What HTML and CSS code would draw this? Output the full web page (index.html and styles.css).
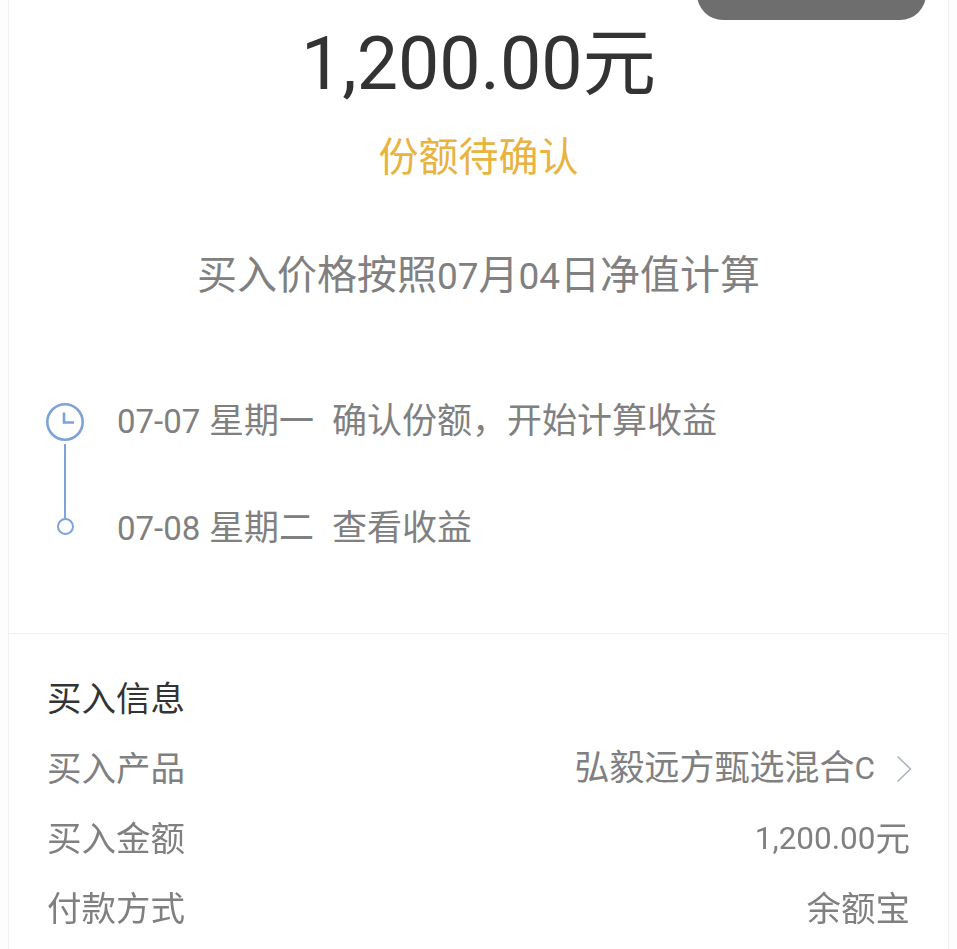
FILE: index.html
```html
<!DOCTYPE html>
<html lang="zh-CN">
<head>
    <meta charset="UTF-8">
    <meta name="viewport" content="width=device-width, initial-scale=1.0">
    <title>买入详情</title>
    <link rel="stylesheet" href="styles.css">
</head>
<body>
    <div class="toast"></div>
    <div class="card">
        <div class="summary">
            <div class="amount">1,200.00元</div>
            <div class="status">份额待确认</div>
            <div class="note">买入价格按照<span class="num">07</span>月<span class="num">04</span>日净值计算</div>
        </div>

        <div class="timeline">
            <div class="track">
                <svg class="clock" width="40" height="40" viewBox="0 0 40 40">
                    <circle cx="20" cy="20" r="17.7" fill="none" stroke="#7da3d8" stroke-width="2.6"/>
                    <path d="M19 10.5V20.5H29" fill="none" stroke="#7da3d8" stroke-width="2.6"/>
                </svg>
                <div class="line"></div>
                <div class="dot"></div>
            </div>
            <div class="steps">
                <div class="step"><span class="num">07-07</span> 星期一<span class="gap"></span>确认份额，开始计算收益</div>
                <div class="step"><span class="num">07-08</span> 星期二<span class="gap"></span>查看收益</div>
            </div>
        </div>

        <div class="info">
            <div class="info-title">买入信息</div>
            <div class="row">
                <span>买入产品</span>
                <span class="value product">弘毅远方甄选混合<span class="num">C</span>
                    <svg class="arrow" width="16" height="28" viewBox="0 0 16 28">
                        <path d="M1.5 1.5L14.5 14L1.5 26.5" fill="none" stroke="#aab2bb" stroke-width="1.5"/>
                    </svg>
                </span>
            </div>
            <div class="row">
                <span>买入金额</span>
                <span class="value"><span class="num">1,200.00</span>元</span>
            </div>
            <div class="row">
                <span>付款方式</span>
                <span class="value">余额宝</span>
            </div>
        </div>
    </div>
</body>
</html>
```

FILE: styles.css
```css
* {
    box-sizing: border-box;
}
html, body {
    height: 100%;
}
body {
    margin: 0;
    overflow: hidden;
    background: #fdfdfd;
    font-family: "Roboto", "Noto Sans CJK SC", sans-serif;
    color: #808080;
}
.card {
    height: 949px;
    margin: 0 8px;
    background: #fff;
    border-left: 1px solid #f1f1f1;
    border-right: 1px solid #f1f1f1;
    filter: blur(0.5px);
}
.toast {
    position: absolute;
    z-index: 2;
    top: -60px;
    left: 697px;
    width: 229px;
    height: 80px;
    border-radius: 26px;
    background: #6e6e6e;
}
.summary {
    height: 354px;
    padding-top: 21px;
    text-align: center;
}
.amount {
    height: 86px;
    font-size: 73.5px;
    line-height: 86px;
    color: #333;
}
.status {
    margin-top: 26px;
    font-size: 40px;
    line-height: 50px;
    color: #e8b33f;
}
.note {
    margin-top: 68px;
    font-size: 40px;
    line-height: 50px;
}
.note .num {
    font-size: 37px;
}
.timeline {
    display: flex;
    height: 280px;
    padding: 48px 0 0 36px;
    border-bottom: 1px solid #f1f1f1;
}
.track {
    display: flex;
    flex-direction: column;
    align-items: center;
    width: 40px;
}
.clock {
    display: block;
}
.line {
    width: 2px;
    height: 74px;
    margin-top: 2px;
    background: #7da3d8;
}
.dot {
    width: 17px;
    height: 17px;
    border: 2px solid #7da3d8;
    border-radius: 50%;
}
.steps {
    margin-left: 32px;
    font-size: 35px;
}
.step {
    height: 107px;
    line-height: 40px;
}
.step .num {
    font-size: 33px;
}
.gap {
    display: inline-block;
    width: 18px;
}
.info {
    padding: 43px 38px 0;
    font-size: 34.5px;
}
.info-title {
    line-height: 44px;
    margin-bottom: 21px;
    color: #333;
}
.row {
    display: flex;
    justify-content: space-between;
    height: 70px;
    line-height: 54px;
}
.value {
    display: flex;
    align-items: center;
    height: 54px;
    white-space: pre;
}
.product {
    font-size: 35px;
}
.value .num {
    font-size: 31.5px;
}
.arrow {
    margin-left: 21px;
    margin-right: -2px;
}
```
